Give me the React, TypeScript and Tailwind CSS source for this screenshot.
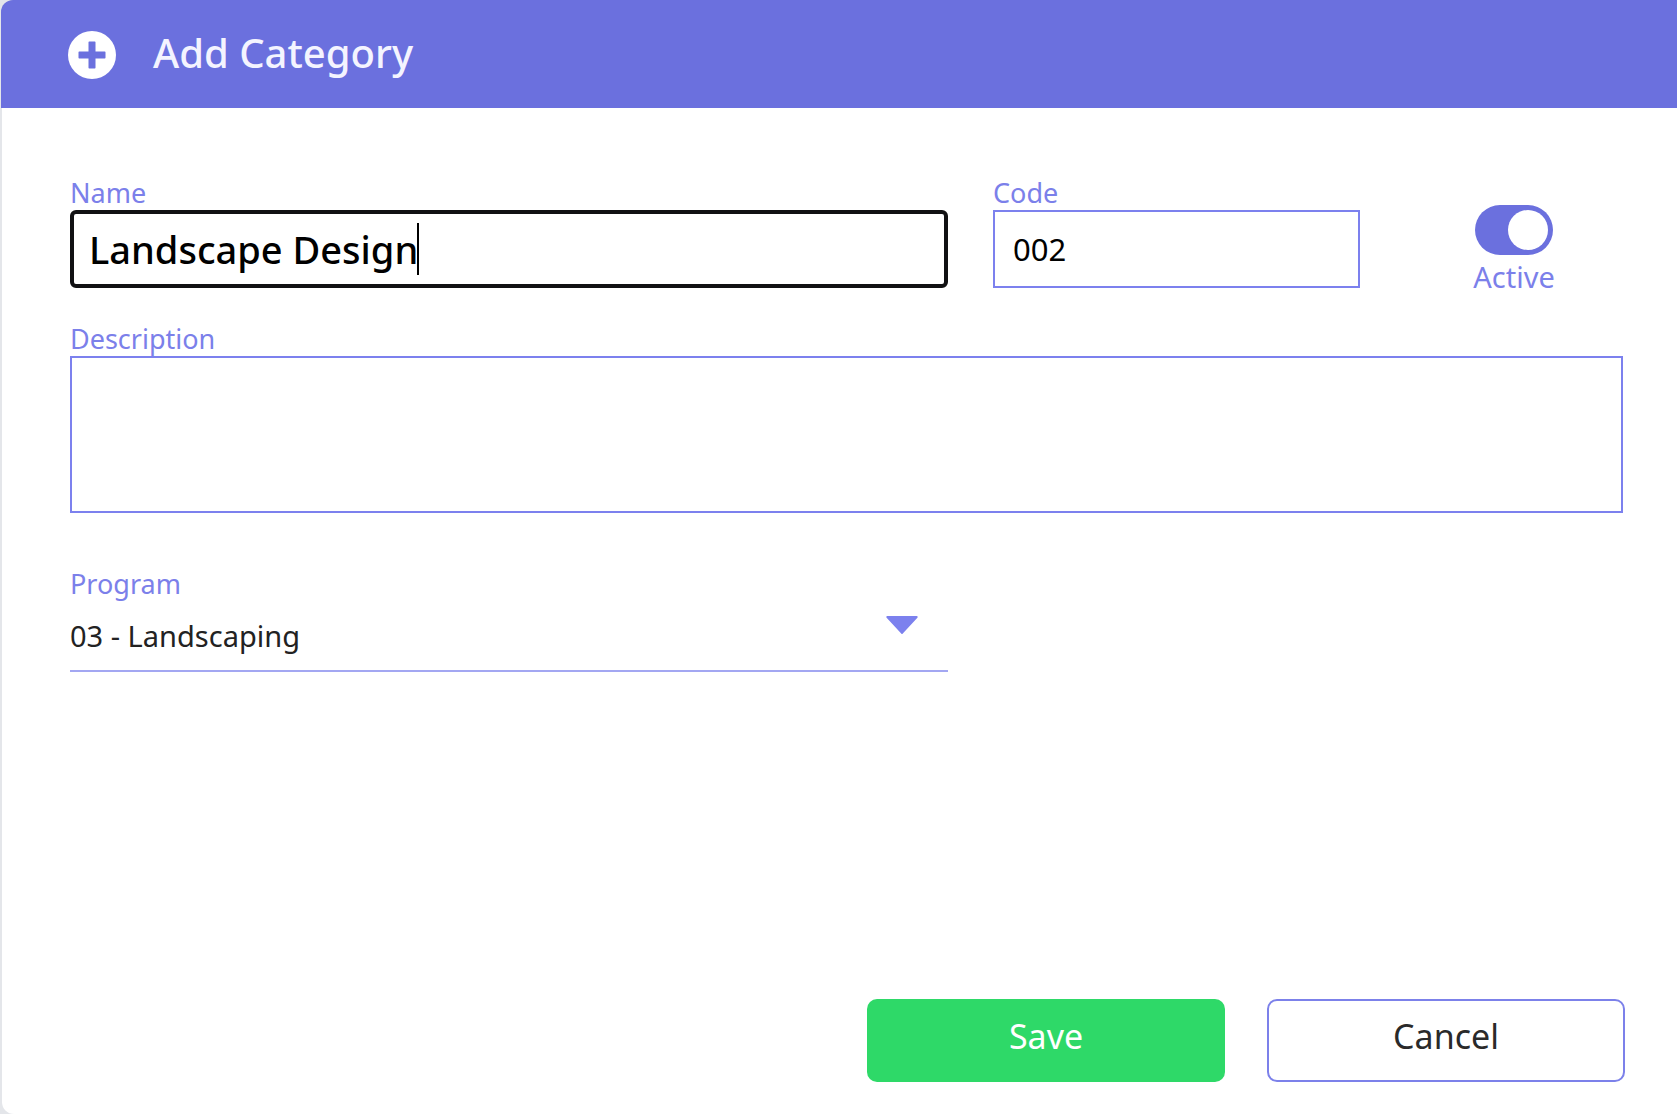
import React, { useState } from 'react';

const labelClass = 'block text-[27px] leading-[34px] text-[#7b80ea]';

function PlusCircle() {
  return (
    <svg viewBox="0 0 48 48" className="w-12 h-12 shrink-0" aria-hidden="true">
      <circle cx="24" cy="24" r="24" fill="#fff" />
      <path
        d="M21.2 10.5h5.6a.7.7 0 0 1 .7.7v9.3h9.3a.7.7 0 0 1 .7.7v5.6a.7.7 0 0 1-.7.7h-9.3v9.3a.7.7 0 0 1-.7.7h-5.6a.7.7 0 0 1-.7-.7v-9.3h-9.3a.7.7 0 0 1-.7-.7v-5.6a.7.7 0 0 1 .7-.7h9.3v-9.3a.7.7 0 0 1 .7-.7z"
        fill="#6b70de"
      />
    </svg>
  );
}

export default function App() {
  const [name, setName] = useState('Landscape Design');
  const [code, setCode] = useState('002');
  const [description, setDescription] = useState('');
  const [active, setActive] = useState(true);

  return (
    <div className="min-h-screen bg-[#e4e6ea] pl-px font-['Noto_Sans','Open_Sans',sans-serif]">
      <form
        className="min-h-screen flex flex-col"
        onSubmit={(e) => e.preventDefault()}
      >
        <header className="h-[108px] bg-[#6b70de] rounded-tl-xl flex items-center gap-[37px] pt-[2px] pl-[67px]">
          <PlusCircle />
          <h1 className="text-[40px] leading-[56px] pb-1 font-medium text-[#f4f4ff]">Add Category</h1>
        </header>

        <div className="ml-px flex-1 flex flex-col bg-white rounded-bl-xl">
          <div className="pt-[68px] pl-[68px] pr-[54px]">
            <div className="grid grid-cols-[878fr_367fr_218fr] gap-x-[45px]">
              <div>
                <label htmlFor="name" className={labelClass}>Name</label>
                <div className="relative">
                  <input
                    id="name"
                    type="text"
                    value={name}
                    onChange={(e) => setName(e.target.value)}
                    className="block w-full h-[78px] border-4 border-[#111113] rounded-md pl-[15px] text-[38px] font-medium text-black outline-none caret-transparent"
                  />
                  {/* text cursor */}
                  <span className="absolute left-[347px] top-[13px] w-[2px] h-[52px] bg-black" />
                </div>
              </div>

              <div>
                <label htmlFor="code" className={labelClass}>Code</label>
                <input
                  id="code"
                  type="text"
                  value={code}
                  onChange={(e) => setCode(e.target.value)}
                  className="block w-full h-[78px] border-2 border-[#7c81ee] pl-[18px] text-[31px] text-black outline-none"
                />
              </div>

              <label className="flex flex-col items-center pt-[29px] cursor-pointer">
                <input
                  type="checkbox"
                  role="switch"
                  checked={active}
                  onChange={(e) => setActive(e.target.checked)}
                  className="peer sr-only"
                />
                <span className="flex items-center justify-start peer-checked:justify-end w-[78px] h-[50px] px-[5px] rounded-full bg-[#b9bbc9] peer-checked:bg-[#6b70de]">
                  <span className="w-10 h-10 rounded-full bg-white" />
                </span>
                <span className="pt-1 text-[29px] leading-[36px] text-[#7b80ea]">Active</span>
              </label>
            </div>

            <div className="mt-[27px]">
              <label htmlFor="description" className={labelClass}>Description</label>
              <textarea
                id="description"
                value={description}
                onChange={(e) => setDescription(e.target.value)}
                className="block w-full h-[157px] border-2 border-[#7c81ee] px-[17px] py-3 text-[31px] text-black resize-none outline-none"
              />
            </div>

            <div className="mt-[54px] grid grid-cols-[878fr_367fr_218fr] gap-x-[45px]">
              <div>
                <label htmlFor="program" className={labelClass}>Program</label>
                <div className="relative">
                  <select
                    id="program"
                    defaultValue="03"
                    className="block w-full h-[71px] appearance-none bg-transparent border-b-2 border-[#a3a7f2] text-[29px] text-[#222] outline-none"
                  >
                    <option value="03">03 - Landscaping</option>
                  </select>
                  <svg
                    viewBox="0 0 32 18"
                    className="absolute right-[30px] top-[15px] w-8 h-[18px] pointer-events-none"
                    aria-hidden="true"
                  >
                    <path d="M1.4 0h29.2a1 1 0 0 1 .8 1.7L16.8 17.4a1 1 0 0 1-1.6 0L.6 1.7A1 1 0 0 1 1.4 0z" fill="#7c81ee" />
                  </svg>
                </div>
              </div>
            </div>
          </div>

          <footer className="mt-auto flex justify-end gap-[42px] pt-8 pb-8 pr-[52px]">
            <button
              type="submit"
              className="w-[358px] h-[83px] pb-2 rounded-[10px] bg-[#2ed968] text-[34px] text-white"
            >
              Save
            </button>
            <button
              type="button"
              className="w-[358px] h-[83px] pb-2 rounded-[10px] border-2 border-[#7c81ea] bg-white text-[34px] text-[#2a2a2a]"
            >
              Cancel
            </button>
          </footer>
        </div>
      </form>
    </div>
  );
}
